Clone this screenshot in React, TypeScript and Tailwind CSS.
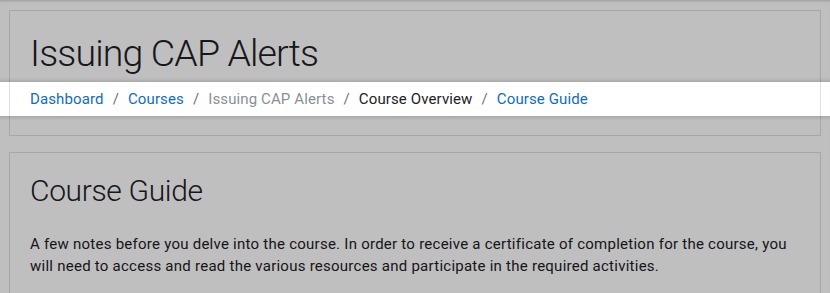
const crumbs = [
  { label: 'Dashboard', kind: 'link' },
  { label: 'Courses', kind: 'link' },
  { label: 'Issuing CAP Alerts', kind: 'muted' },
  { label: 'Course Overview', kind: 'plain' },
  { label: 'Course Guide', kind: 'link' },
];

const Breadcrumb = () => (
  <nav className="relative">
    {/* tour highlight: transparent hole, the huge shadow dims the rest of the page */}
    <div className="pointer-events-none absolute -top-[6px] -bottom-[5px] -left-[30px] -right-[31px] z-10 shadow-[0_0_0_9999px_rgba(0,0,0,0.25),0_0_3px_2px_rgba(0,0,0,0.12)]" />
    <ol className="flex items-center text-[15px] leading-[22.5px] tracking-[0.12px]">
      {crumbs.map((c, i) => (
        <li key={c.label} className="flex items-center">
          {i > 0 && <span className="px-[9px] text-[#6a737b]">/</span>}
          <span
            className={
              c.kind === 'link' ? 'text-[#0f6cbf]' : c.kind === 'muted' ? 'text-[#8a9096]' : 'text-[#1d2125]'
            }
          >
            {c.label}
          </span>
        </li>
      ))}
    </ol>
  </nav>
);

export default function App() {
  return (
    <div className="h-[293px] overflow-hidden bg-white font-['Roboto',sans-serif] text-[#1d2125] shadow-[inset_0_3px_3px_-2px_rgba(0,0,0,0.2)]">
      <div className="flex flex-col gap-4 px-[9px] pt-[10px]">
        <header className="border border-black/[0.125] px-5 pt-5 pb-6">
          <h1 className="text-[37.5px] font-light leading-[1.2] tracking-[-0.85px]">Issuing CAP Alerts</h1>
          <div className="mt-3">
            <Breadcrumb />
          </div>
        </header>

        <section className="border border-black/[0.125] px-5 pt-5 pb-6">
          <h2 className="text-[30px] font-light leading-[1.2] tracking-[-0.35px]">Course Guide</h2>
          <p className="mt-6 text-[15px] leading-[22.5px] tracking-[0.25px]">
            A few notes before you delve into the course. In order to receive a certificate of completion for the course, you will need to access and read the various resources and participate in the required activities.
          </p>
        </section>
      </div>
    </div>
  );
}
